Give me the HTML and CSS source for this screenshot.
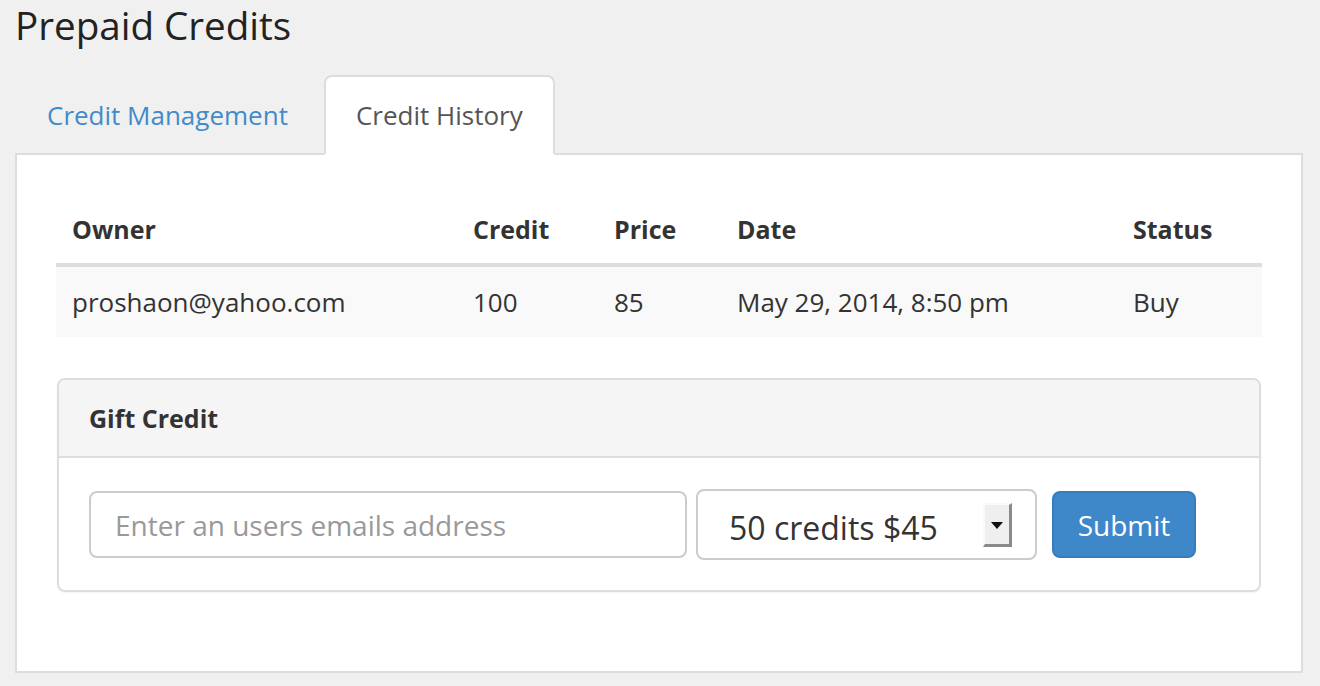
FILE: index.html
```html
<!DOCTYPE html>
<html lang="en">
<head>
    <meta charset="UTF-8">
    <meta name="viewport" content="width=device-width, initial-scale=1.0">
    <title>Prepaid Credits</title>
    <link rel="stylesheet" href="styles.css">
</head>
<body>
    <div class="page">
        <h1>Prepaid Credits</h1>

        <!-- Tabs -->
        <ul class="nav-tabs">
            <li><a href="#">Credit Management</a></li>
            <li class="active"><a href="#">Credit History</a></li>
        </ul>

        <div class="tab-content">
            <table class="history">
                <thead>
                    <tr>
                        <th class="col-owner">Owner</th>
                        <th class="col-credit">Credit</th>
                        <th class="col-price">Price</th>
                        <th class="col-date">Date</th>
                        <th class="col-status">Status</th>
                    </tr>
                </thead>
                <tbody>
                    <tr>
                        <td>proshaon@yahoo.com</td>
                        <td>100</td>
                        <td>85</td>
                        <td>May 29, 2014, 8:50 pm</td>
                        <td>Buy</td>
                    </tr>
                </tbody>
            </table>

            <!-- Gift credit panel -->
            <div class="panel">
                <div class="panel-heading">Gift Credit</div>
                <form class="panel-body">
                    <input type="email" class="email-input" placeholder="Enter an users emails address">
                    <div class="select-wrap">
                        <select class="credit-select">
                            <option>50 credits $45</option>
                            <option>100 credits $85</option>
                        </select>
                        <span class="select-arrow"></span>
                    </div>
                    <button type="submit" class="btn">Submit</button>
                </form>
            </div>
        </div>
    </div>
</body>
</html>
```

FILE: styles.css
```css
* {
    margin: 0;
    padding: 0;
    box-sizing: border-box;
}

body {
    font-family: 'Open Sans', 'Liberation Sans', sans-serif;
    background: #f0f0f0;
    color: #333;
}

.page {
    margin: 0 17px 0 15px;
}

h1 {
    font-size: 38.6px;
    font-weight: 400;
    color: #222;
    line-height: 44px;
    padding-top: 3px;
    margin-bottom: 28px;
}

/* Tabs */
.nav-tabs {
    list-style: none;
    display: flex;
    position: relative;
    z-index: 1;
    margin-bottom: -2px;
}

.nav-tabs li {
    margin-right: 4px;
}

.nav-tabs a {
    display: block;
    padding: 19px 30px;
    line-height: 38px;
    font-size: 26px;
    color: #428bca;
    text-decoration: none;
    border: 2px solid transparent;
    border-radius: 8px 8px 0 0;
}

.nav-tabs .active a {
    color: #555;
    background: #fff;
    border-color: #ddd;
    border-bottom-color: #fff;
}

.tab-content {
    background: #fff;
    border: 2px solid #ddd;
    padding: 39px 39px 79px;
}

/* Table */
.history {
    width: 100%;
    border-collapse: collapse;
    margin-bottom: 41px;
    font-size: 26px;
}

.history th {
    text-align: left;
    font-weight: 700;
    font-size: 25px;
    padding: 17px 16px 15px;
    line-height: 37px;
    border-bottom: 4px solid #ddd;
}

.history td {
    padding: 16px;
    line-height: 38px;
    background: #f9f9f9;
}

.col-owner { width: 401px; }
.col-credit { width: 141px; }
.col-price { width: 123px; }
.col-date { width: 396px; }

/* Panel */
.panel {
    margin: 0 1px;
    border: 2px solid #ddd;
    border-radius: 8px;
    box-shadow: 0 1px 2px rgba(0, 0, 0, 0.05);
}

.panel-heading {
    background: #f5f5f5;
    border-bottom: 2px solid #ddd;
    border-radius: 6px 6px 0 0;
    padding: 20px 30px;
    line-height: 36px;
    font-size: 25px;
    font-weight: 700;
    color: #333;
}

.panel-body {
    display: flex;
    align-items: center;
    padding: 31px 30px 30px;
}

.email-input {
    width: 598px;
    height: 67px;
    padding: 0 24px;
    border: 2px solid #ccc;
    border-radius: 8px;
    font-family: inherit;
    font-size: 28px;
    color: #555;
    margin-right: 9px;
}

.email-input::placeholder {
    color: #999;
}

.select-wrap {
    position: relative;
    margin-right: 15px;
}

.credit-select {
    -webkit-appearance: none;
    appearance: none;
    display: block;
    width: 341px;
    height: 71px;
    padding: 6px 0 0 31px;
    border: 2px solid #ccc;
    border-radius: 8px;
    background: #fff;
    font-family: inherit;
    font-size: 32px;
    color: #333;
}

.select-arrow {
    position: absolute;
    top: 14px;
    right: 25px;
    width: 29px;
    height: 44px;
    background: #efefef;
    border-top: 2px solid #fafafa;
    border-left: 2px solid #fafafa;
    border-right: 3px solid #8a8a8a;
    border-bottom: 3px solid #8a8a8a;
    pointer-events: none;
}

.select-arrow::after {
    content: '';
    position: absolute;
    top: 17px;
    left: 6px;
    border-left: 6px solid transparent;
    border-right: 6px solid transparent;
    border-top: 7px solid #111;
}

.btn {
    width: 144px;
    height: 67px;
    background: #3e87c8;
    color: #fff;
    border: 2px solid #357ebd;
    border-radius: 8px;
    font-family: inherit;
    font-size: 28px;
    cursor: pointer;
}

.btn:hover {
    background: #3276b1;
}
```
